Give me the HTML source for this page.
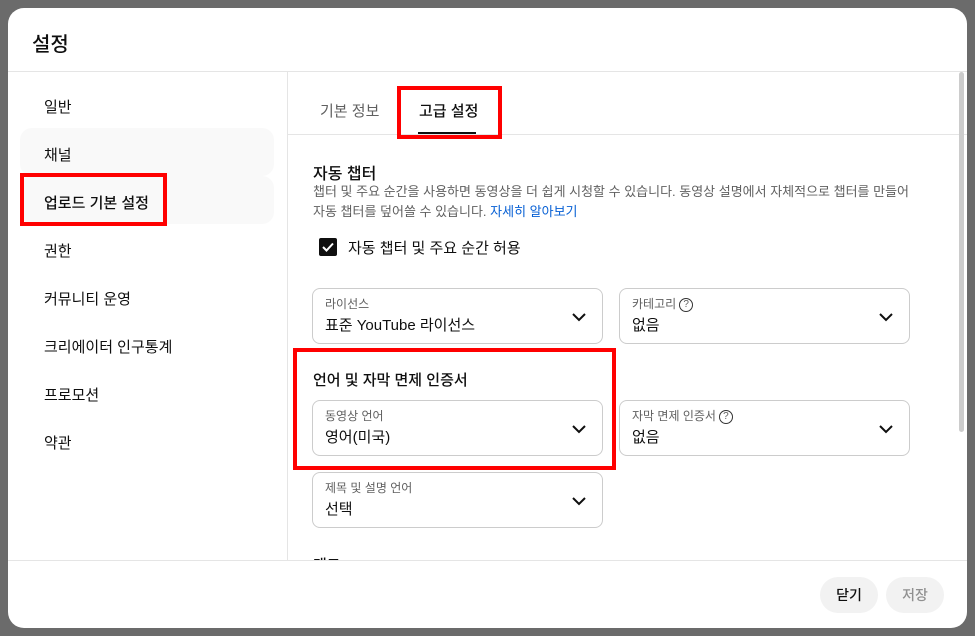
<!DOCTYPE html>
<html><head><meta charset="utf-8"><style>
*{box-sizing:border-box;margin:0;padding:0}
body{width:975px;height:636px;overflow:hidden;background:#6b6b6b;font-family:"Liberation Sans","Noto Sans CJK KR",sans-serif;color:#0f0f0f;position:relative}
.dlg{position:absolute;left:8px;top:8px;width:959px;height:620px;background:#fff;border-radius:16px;overflow:hidden}
.title{position:absolute;left:24px;top:20px;font-size:20px;font-weight:500}
.hl{position:absolute;left:0;right:0;top:63px;border-top:1px solid #e5e5e5}
.vl{position:absolute;left:279px;top:63px;bottom:68px;border-left:1px solid #e5e5e5}
.nav{position:absolute;left:36px;font-size:15px}
.navbg{position:absolute;left:12px;width:254px;height:48px;background:#f9f9f9;border-radius:12px}
.red{position:absolute;border:4px solid #f00}
.tab{position:absolute;top:92px;font-size:15px}
.tl{position:absolute;left:280px;right:0;top:126px;border-top:1px solid #e5e5e5}
.sel{position:absolute;width:291px;height:56px;border:1px solid #ccc;border-radius:8px;background:#fff}
.sel .l{position:absolute;left:12px;top:6px;font-size:12px;color:#606060}
.sel .v{position:absolute;left:12px;top:25px;font-size:15px}
.sel svg{position:absolute;right:15px;top:20px}
.q{display:inline-block;width:14px;height:14px;border:1.3px solid #333;border-radius:50%;font-size:10px;text-align:center;line-height:12px;margin-left:3px;vertical-align:1px}
.fl{position:absolute;left:0;right:0;top:552px;border-top:1px solid #e5e5e5}
.btn{position:absolute;top:569px;width:58px;height:36px;border-radius:18px;background:#f2f2f2;font-size:14px;text-align:center;line-height:36px;font-weight:500}
</style></head><body>
<div class="dlg">
<div class="title">설정</div>
<div class="hl"></div>
<div class="vl"></div>
<div class="navbg" style="top:120px"></div>
<div class="navbg" style="top:168px"></div>
<div class="nav" style="top:88px">일반</div>
<div class="nav" style="top:136px">채널</div>
<div class="nav" style="top:184px;font-weight:500">업로드 기본 설정</div>
<div class="nav" style="top:232px">권한</div>
<div class="nav" style="top:280px">커뮤니티 운영</div>
<div class="nav" style="top:328px">크리에이터 인구통계</div>
<div class="nav" style="top:376px">프로모션</div>
<div class="nav" style="top:424px">약관</div>
<div class="tab" style="left:312px;color:#606060">기본 정보</div>
<div class="tab" style="left:411px;font-weight:500">고급 설정</div>
<div style="position:absolute;left:410px;top:124px;width:58px;height:2px;background:#0f0f0f"></div>
<div class="tl"></div>
<div style="position:absolute;left:305px;top:152px;font-size:16px;font-weight:500">자동 챕터</div>
<div style="position:absolute;left:305px;top:174px;font-size:13px;color:#606060;line-height:20px;width:620px">챕터 및 주요 순간을 사용하면 동영상을 더 쉽게 시청할 수 있습니다. 동영상 설명에서 자체적으로 챕터를 만들어<br>자동 챕터를 덮어쓸 수 있습니다. <span style="color:#065fd4">자세히 알아보기</span></div>
<div style="position:absolute;left:311px;top:230px;width:18px;height:18px;background:#0f0f0f;border-radius:2px"><svg width="18" height="18" viewBox="0 0 18 18"><path d="M4 9l3.5 3.5L14 5.5" stroke="#fff" stroke-width="2" fill="none"/></svg></div>
<div style="position:absolute;left:340px;top:229px;font-size:15px">자동 챕터 및 주요 순간 허용</div>
<div class="sel" style="left:304px;top:280px"><div class="l">라이선스</div><div class="v">표준 YouTube 라이선스</div><svg width="16" height="16" viewBox="0 0 16 16"><path d="M2 5l6 6 6-6" stroke="#0f0f0f" stroke-width="2" fill="none"/></svg></div>
<div class="sel" style="left:611px;top:280px"><div class="l">카테고리<span class="q">?</span></div><div class="v">없음</div><svg width="16" height="16" viewBox="0 0 16 16"><path d="M2 5l6 6 6-6" stroke="#0f0f0f" stroke-width="2" fill="none"/></svg></div>
<div style="position:absolute;left:305px;top:361px;font-size:15px;font-weight:500">언어 및 자막 면제 인증서</div>
<div class="sel" style="left:304px;top:392px"><div class="l">동영상 언어</div><div class="v">영어(미국)</div><svg width="16" height="16" viewBox="0 0 16 16"><path d="M2 5l6 6 6-6" stroke="#0f0f0f" stroke-width="2" fill="none"/></svg></div>
<div class="sel" style="left:611px;top:392px"><div class="l">자막 면제 인증서<span class="q">?</span></div><div class="v">없음</div><svg width="16" height="16" viewBox="0 0 16 16"><path d="M2 5l6 6 6-6" stroke="#0f0f0f" stroke-width="2" fill="none"/></svg></div>
<div class="sel" style="left:304px;top:464px"><div class="l">제목 및 설명 언어</div><div class="v">선택</div><svg width="16" height="16" viewBox="0 0 16 16"><path d="M2 5l6 6 6-6" stroke="#0f0f0f" stroke-width="2" fill="none"/></svg></div>
<div style="position:absolute;left:305px;top:546px;font-size:15px;font-weight:500;height:6px;overflow:hidden">태그</div>
<div style="position:absolute;left:951px;top:64px;width:5px;height:360px;background:#ccc;border-radius:3px"></div>
<div class="fl"></div>
<div class="btn" style="left:812px">닫기</div>
<div class="btn" style="left:878px;color:#909090">저장</div>
<div class="red" style="left:12px;top:165px;width:147px;height:53px"></div>
<div class="red" style="left:389px;top:78px;width:105px;height:53px"></div>
<div class="red" style="left:285px;top:340px;width:323px;height:122px"></div>
</div>
</body></html>
